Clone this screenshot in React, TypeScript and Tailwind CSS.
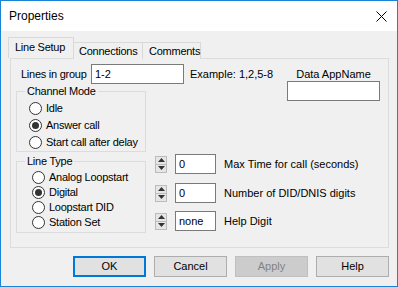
import React from "react";

// Win10 style "Properties" dialog, Line Setup tab

type RadioProps = {
  label: string;
  checked?: boolean;
  rowClass: string;
};

function Radio({ label, checked, rowClass }: RadioProps) {
  return (
    <div className={`flex items-center ${rowClass}`}>
      <span className="w-[13px] h-[13px] rounded-full border border-[#333333] bg-white flex items-center justify-center shrink-0">
        {checked && <span className="w-[7px] h-[7px] rounded-full bg-[#333333]" />}
      </span>
      <span className="ml-[4px] whitespace-nowrap tracking-[-0.25px]">{label}</span>
    </div>
  );
}

function Spinner() {
  return (
    <div className="w-[12px] h-[17px] flex flex-col border border-[#bcbcbc] bg-[#e6e6e6]">
      <div className="flex-1 flex items-center justify-center border-b border-[#bcbcbc]">
        <svg width="7" height="4" viewBox="0 0 7 4">
          <path d="M0 4 L3.5 0 L7 4 Z" fill="#333333" />
        </svg>
      </div>
      <div className="flex-1 flex items-center justify-center">
        <svg width="7" height="4" viewBox="0 0 7 4">
          <path d="M0 0 L3.5 4 L7 0 Z" fill="#333333" />
        </svg>
      </div>
    </div>
  );
}

type SpinRowProps = {
  value: string;
  label: string;
  rowClass?: string;
};

function SpinRow({ value, label, rowClass = "" }: SpinRowProps) {
  return (
    <div className={`flex items-center h-[20px] ${rowClass}`}>
      <Spinner />
      <div className="ml-[8px] w-[41px] h-[20px] border border-[#7a7a7a] bg-white flex items-center pl-[3px]">
        {value}
      </div>
      <span className="ml-[8px] whitespace-nowrap">{label}</span>
    </div>
  );
}

export default function App() {
  const buttons = ["OK", "Cancel", "Apply", "Help"];

  return (
    <div className="w-[398px] h-[287px] border border-[#1883d7] bg-[#f0f0f0] flex flex-col font-['Liberation_Sans',Arial,sans-serif] text-[11px] text-black leading-none">
      {/* Title bar */}
      <div className="h-[30px] bg-white flex items-center justify-between pl-[8px] pr-[10px] shrink-0">
        <span className="text-[12px]">Properties</span>
        <svg width="11" height="11" viewBox="0 0 11 11">
          <path d="M0.5 0.5 L10.5 10.5 M10.5 0.5 L0.5 10.5" stroke="#000000" strokeWidth="1" />
        </svg>
      </div>

      {/* Body */}
      <div className="pl-[9px] pr-[8px] pt-[7px]">
        {/* Tabs */}
        <div className="flex items-end h-[20px] -ml-[2px] relative z-10 tracking-[-0.25px]">
          <div className="w-[66px] h-[21px] border border-b-0 border-[#d9d9d9] bg-[#f0f0f0] flex items-center pl-[6px] pb-[1px]">
            Line Setup
          </div>
          <div className="w-[69px] h-[17px] border border-l-0 border-b-0 border-[#d9d9d9] bg-[#f0f0f0] flex items-center pl-[5px] -mb-[1px]">
            Connections
          </div>
          <div className="w-[58px] h-[17px] border border-l-0 border-b-0 border-[#d9d9d9] bg-[#f0f0f0] flex items-center pl-[6px] -mb-[1px]">
            Comments
          </div>
        </div>

        {/* Tab panel */}
        <div className="h-[190px] border border-[#dcdcdc] bg-[#f0f0f0]">
          <div className="flex">
            <div>
              <div className="flex items-center h-[20px] mt-[5px] pl-[10px]">
                <span className="w-[70px] whitespace-nowrap tracking-[-0.25px]">Lines in group</span>
                <div className="w-[93px] h-[20px] border border-[#7a7a7a] bg-white flex items-center pl-[3px]">
                  1-2
                </div>
                <span className="ml-[6px] whitespace-nowrap">Example: 1,2,5-8</span>
              </div>

              <fieldset className="ml-[5px] w-[130px] border border-[#dcdcdc] pl-[8px] pb-0">
                <legend className="px-[2px] leading-[14px] tracking-[-0.25px]">Channel Mode</legend>
                <div className="pt-[2px] pl-[4px]">
                  <Radio label="Idle" rowClass="h-[17px]" />
                  <Radio label="Answer call" checked rowClass="h-[17px]" />
                  <Radio label="Start call after delay" rowClass="h-[17px]" />
                </div>
              </fieldset>
            </div>

            <div className="ml-auto mr-[8px] pt-[9px] w-[93px] flex flex-col">
              <span className="h-[13px] leading-[13px] text-center whitespace-nowrap">Data AppName</span>
              <div className="w-[93px] h-[20px] border border-[#7a7a7a] bg-white" />
            </div>
          </div>

          <div className="flex mt-[2px]">
            <fieldset className="ml-[5px] w-[130px] border border-[#dcdcdc] pl-[8px] pb-[2px]">
              <legend className="px-[2px] leading-[14px] tracking-[-0.25px]">Line Type</legend>
              <div className="pt-[2px] pl-[7px]">
                <Radio label="Analog Loopstart" rowClass="h-[15px]" />
                <Radio label="Digital" checked rowClass="h-[15px]" />
                <Radio label="Loopstart DID" rowClass="h-[15px]" />
                <Radio label="Station Set" rowClass="h-[15px]" />
              </div>
            </fieldset>

            <div className="ml-[9px] flex flex-col">
              <SpinRow value="0" label="Max Time for call (seconds)" />
              <SpinRow value="0" label="Number of DID/DNIS digits" rowClass="mt-[9px]" />
              <SpinRow value="none" label="Help Digit" rowClass="mt-[8px]" />
            </div>
          </div>
        </div>
      </div>

      {/* Dialog buttons */}
      <div className="flex justify-end gap-[8px] pr-[8px] mt-[8px]">
        {buttons.map((b) => (
          <div
            key={b}
            className={`w-[73px] h-[21px] flex items-center justify-center text-[11px] ${
              b === "OK"
                ? "border-2 border-[#0078d7] bg-[#e1e1e1]"
                : b === "Apply"
                ? "border border-[#bfbfbf] bg-[#cccccc] text-[#838383]"
                : "border border-[#adadad] bg-[#e1e1e1]"
            }`}
          >
            {b}
          </div>
        ))}
      </div>
    </div>
  );
}
